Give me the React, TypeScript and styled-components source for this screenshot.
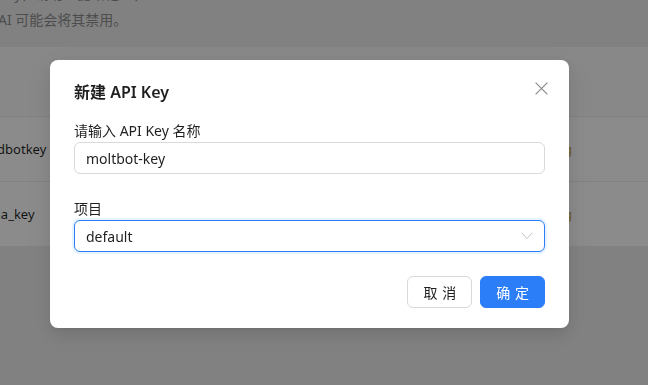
import styled, { createGlobalStyle } from 'styled-components';

const GlobalStyle = createGlobalStyle`
    html, body {
        margin: 0;
        padding: 0;
        width: 648px;
        height: 385px;
        overflow: hidden;
    }
    body {
        font-family: "Noto Sans", "Noto Sans CJK SC", sans-serif;
        font-size: 14px;
        color: rgba(0, 0, 0, 0.88);
    }
`;

const keys = [
    { name: 'clawdbotkey', secret: 'sk-****g' },
    { name: 'media_key', secret: 'sk-****g' },
];

export default function App() {
    return (
        <>
            <GlobalStyle />
            <Page>
                <Notice>
                    <NoticeLine>Key，请勿泄露给他人，</NoticeLine>
                    <NoticeLine>AI 可能会将其禁用。</NoticeLine>
                </Notice>
                <Table>
                    <HeaderRow />
                    {keys.map((k) => (
                        <Row key={k.name}>
                            <NameCell>{k.name}</NameCell>
                            <SecretCell>{k.secret}</SecretCell>
                        </Row>
                    ))}
                </Table>
            </Page>
            <Mask />
            <Modal>
                <CloseButton aria-label="关闭">
                    <svg width="13" height="13" viewBox="0 0 13 13">
                        <path d="M0.6 0.6 L12.4 12.4 M12.4 0.6 L0.6 12.4" stroke="currentColor" strokeWidth="1.2" fill="none" />
                    </svg>
                </CloseButton>
                <Title>新建 API Key</Title>
                <Body>
                    <Field>
                        <Label>请输入 API Key 名称</Label>
                        <Input defaultValue="moltbot-key" />
                    </Field>
                    <Field>
                        <Label>项目</Label>
                        <Select>
                            <span>default</span>
                            <svg width="12" height="8" viewBox="0 0 12 8">
                                <path d="M0.7 0.7 L6 6.6 L11.3 0.7" stroke="#c2c2c2" strokeWidth="1" fill="none" />
                            </svg>
                        </Select>
                    </Field>
                </Body>
                <Footer>
                    <Button>
                        <span>取消</span>
                    </Button>
                    <Button $primary>
                        <span>确定</span>
                    </Button>
                </Footer>
            </Modal>
        </>
    );
}

const Page = styled.div`
    width: 648px;
    height: 385px;
    background: #ececec;
    display: flex;
    flex-direction: column;
`;

const Notice = styled.div`
    display: flex;
    flex-direction: column;
    margin-top: -19px;
    margin-left: -2px;
    height: 66px;
`;

const NoticeLine = styled.div`
    line-height: 26px;
    height: 26px;
    color: #8c8c8c;
    white-space: nowrap;
`;

const Table = styled.div`
    display: flex;
    flex-direction: column;
    background: #fff;
`;

const Row = styled.div`
    display: flex;
    align-items: center;
    justify-content: space-between;
    height: 64px;
    border-bottom: 1px solid #ececec;
    background: #fefefe;
    font-size: 13px;
`;

const HeaderRow = styled(Row)`
    height: 69px;
    background: #f8f8f8;
`;

const NameCell = styled.div`
    margin-left: -30px;
    color: rgba(0, 0, 0, 0.88);
    white-space: nowrap;
`;

const SecretCell = styled.div`
    margin-right: 76px;
    color: #c89b3c;
    white-space: nowrap;
`;

const Mask = styled.div`
    position: fixed;
    inset: 0;
    background: rgba(0, 0, 0, 0.45);
`;

const Modal = styled.div`
    position: fixed;
    left: 50px;
    top: 60px;
    width: 519px;
    box-sizing: border-box;
    padding: 20px 24px;
    background: #fff;
    border-radius: 8px;
    box-shadow: 0 6px 16px 0 rgba(0, 0, 0, 0.08), 0 3px 6px -4px rgba(0, 0, 0, 0.12),
        0 9px 28px 8px rgba(0, 0, 0, 0.05);
    display: flex;
    flex-direction: column;
`;

const CloseButton = styled.button`
    position: absolute;
    top: 17px;
    right: 17px;
    width: 22px;
    height: 22px;
    padding: 0;
    border: none;
    background: transparent;
    color: #8c8c8c;
    display: flex;
    align-items: center;
    justify-content: center;
`;

const Title = styled.div`
    font-size: 16px;
    line-height: 24px;
    font-weight: 600;
    color: rgba(0, 0, 0, 0.88);
`;

const Body = styled.div`
    display: flex;
    flex-direction: column;
    gap: 24px;
    margin-top: 16px;
`;

const Field = styled.div`
    display: flex;
    flex-direction: column;
`;

const Label = styled.div`
    line-height: 22px;
    color: rgba(0, 0, 0, 0.88);
`;

const Input = styled.input`
    box-sizing: border-box;
    height: 32px;
    width: 100%;
    padding: 4px 11px;
    font: inherit;
    font-size: 14px;
    color: rgba(0, 0, 0, 0.88);
    border: 1px solid #d9d9d9;
    border-radius: 6px;
    outline: none;
    background: #fff;
`;

const Select = styled.div`
    box-sizing: border-box;
    height: 32px;
    padding: 0 11px;
    display: flex;
    align-items: center;
    justify-content: space-between;
    border: 1px solid #2c7ef8;
    border-radius: 6px;
    box-shadow: 0 0 0 2px rgba(5, 145, 255, 0.1);
    color: rgba(0, 0, 0, 0.88);
`;

const Footer = styled.div`
    display: flex;
    justify-content: flex-end;
    gap: 8px;
    margin-top: 24px;
`;

const Button = styled.button<{ $primary?: boolean }>`
    box-sizing: border-box;
    height: 32px;
    padding: 0 15px;
    font: inherit;
    font-size: 14px;
    white-space: nowrap;
    border-radius: 6px;
    border: 1px solid ${({ $primary }) => ($primary ? '#2c7ef8' : '#d9d9d9')};
    background: ${({ $primary }) => ($primary ? '#2c7ef8' : '#fff')};
    color: ${({ $primary }) => ($primary ? '#fff' : 'rgba(0, 0, 0, 0.88)')};

    span {
        letter-spacing: 0.34em;
        margin-right: -0.34em;
    }
`;
